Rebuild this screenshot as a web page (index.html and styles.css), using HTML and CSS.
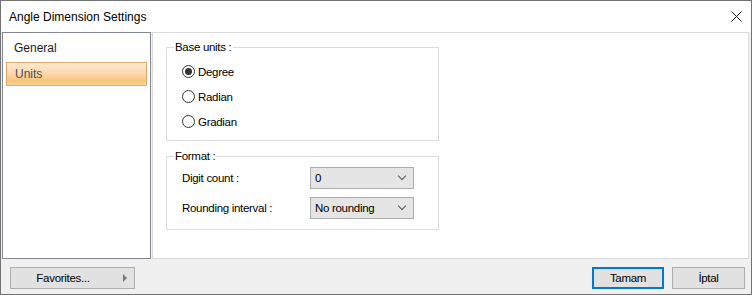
FILE: index.html
```html
<!DOCTYPE html>
<html>
    <head lang="en">
        <meta charset="utf-8">
        <title>Angle Dimension Settings</title>
        <link rel="stylesheet" href="styles.css">
    </head>
    <body>
        <div class="window">
            <div class="titleBar">
                <span class="titleText">Angle Dimension Settings</span>
                <svg class="closeIcon" width="11" height="11" viewBox="0 0 11 11">
                    <path d="M0.5 0.5 L10.5 10.5 M10.5 0.5 L0.5 10.5" stroke="#1a1a1a" stroke-width="1" fill="none"/>
                </svg>
            </div>
            <div class="mainArea">
                <div class="sideNav">
                    <div class="navItem">General</div>
                    <div class="navItem selected">Units</div>
                </div>
                <div class="contentPanel">
                    <div class="groupBox baseUnits">
                        <span class="groupLegend">Base units :</span>
                        <div class="radioRow"><span class="radioDot checked"></span><span>Degree</span></div>
                        <div class="radioRow"><span class="radioDot"></span><span>Radian</span></div>
                        <div class="radioRow"><span class="radioDot"></span><span>Gradian</span></div>
                    </div>
                    <div class="groupBox formatBox">
                        <span class="groupLegend">Format :</span>
                        <div class="fieldRow">
                            <span class="fieldLabel">Digit count :</span>
                            <div class="comboBox"><span>0</span><span class="chevron"></span></div>
                        </div>
                        <div class="fieldRow">
                            <span class="fieldLabel">Rounding interval :</span>
                            <div class="comboBox"><span>No rounding</span><span class="chevron"></span></div>
                        </div>
                    </div>
                </div>
            </div>
            <div class="footerBar">
                <div class="dlgButton favButton"><span class="favLabel">Favorites...</span><span class="favArrow"></span></div>
                <div class="footerRight">
                    <div class="dlgButton okButton">Tamam</div>
                    <div class="dlgButton cancelButton">İptal</div>
                </div>
            </div>
        </div>
    </body>
</html>
```

FILE: styles.css
```css
body {
    margin: 0;
    font-family: "Liberation Sans", Arial, sans-serif;
    font-size: 12px;
    color: #000;
}
.window {
    width: 752px;
    height: 295px;
    box-sizing: border-box;
    border: 1px solid #737373;
    background: #f0f0f0;
    display: flex;
    flex-direction: column;
}
.titleBar {
    height: 31px;
    flex: none;
    background: #fff;
    display: flex;
    align-items: center;
    justify-content: space-between;
    padding: 0 9px 0 8px;
}
.titleText {
    font-size: 12px;
    color: #000;
}
.closeIcon {
    display: block;
}
.mainArea {
    height: 227px;
    flex: none;
    display: flex;
    gap: 1px;
    padding: 0 2px 0 1px;
}
.sideNav {
    width: 149px;
    box-sizing: border-box;
    border: 1px solid #828790;
    background: #fff;
    padding: 3px 3px 0 3px;
    display: flex;
    flex-direction: column;
    gap: 2px;
}
.navItem {
    height: 24px;
    box-sizing: border-box;
    display: flex;
    align-items: center;
    padding-left: 8px;
    color: #1a1a1a;
}
.navItem.selected {
    border: 1px solid #dfab6b;
    background: linear-gradient(#fee9d2, #fcdab0 45%, #f9c47c 80%, #fbd196);
    color: #4f4f4f;
}
.contentPanel {
    flex: 1;
    box-sizing: border-box;
    border: 1px solid #dadada;
    background: #fff;
    padding: 14px 0 0 13px;
    font-size: 11.5px;
    letter-spacing: -0.3px;
}
.groupBox {
    position: relative;
    width: 273px;
    box-sizing: border-box;
    border: 1px solid #dcdcdc;
}
.groupLegend {
    position: absolute;
    top: -8px;
    left: 7px;
    background: #fff;
    padding: 0 1px;
    line-height: 14px;
}
.baseUnits {
    height: 94px;
    padding: 11px 0 0 15px;
}
.radioRow {
    height: 25px;
    display: flex;
    align-items: center;
    gap: 3px;
}
.radioDot {
    width: 13px;
    height: 13px;
    box-sizing: border-box;
    border: 1px solid #333;
    border-radius: 50%;
    background: #fff;
    display: flex;
    align-items: center;
    justify-content: center;
}
.radioDot.checked::after {
    content: "";
    width: 7px;
    height: 7px;
    border-radius: 50%;
    background: #333;
}
.formatBox {
    margin-top: 15px;
    height: 74px;
    padding: 10px 0 0 15px;
    display: flex;
    flex-direction: column;
    gap: 8px;
}
.fieldRow {
    display: flex;
    align-items: center;
    height: 22px;
}
.fieldLabel {
    width: 128px;
}
.comboBox {
    width: 104px;
    height: 22px;
    box-sizing: border-box;
    border: 1px solid #adadad;
    background: #e5e5e5;
    display: flex;
    align-items: center;
    justify-content: space-between;
    padding: 0 8px 0 4px;
}
.chevron {
    width: 5px;
    height: 5px;
    border-right: 1px solid #555;
    border-bottom: 1px solid #555;
    transform: rotate(45deg);
    margin-top: -4px;
}
.footerBar {
    flex: 1;
    display: flex;
    justify-content: space-between;
    padding: 8px 6px 0 9px;
    font-size: 11.5px;
    letter-spacing: -0.3px;
}
.footerRight {
    display: flex;
    gap: 8px;
}
.dlgButton {
    height: 22px;
    box-sizing: border-box;
    border: 1px solid #adadad;
    background: #e1e1e1;
    display: flex;
    align-items: center;
    justify-content: center;
}
.favButton {
    width: 125px;
    padding-right: 7px;
}
.favLabel {
    flex: 1;
    text-align: center;
}
.favArrow {
    width: 0;
    height: 0;
    border-top: 4px solid transparent;
    border-bottom: 4px solid transparent;
    border-left: 4px solid #7a7a7a;
    margin-left: 8px;
}
.okButton {
    width: 72px;
    border: 2px solid #0078d7;
}
.cancelButton {
    width: 73px;
}
```
